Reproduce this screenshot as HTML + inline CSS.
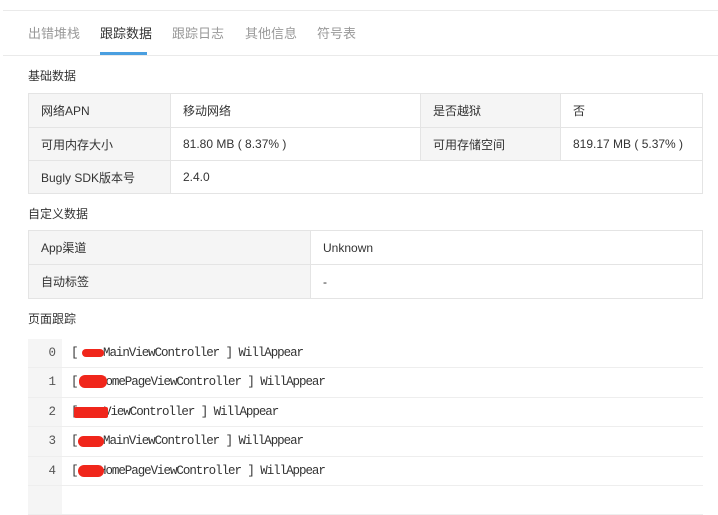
<!DOCTYPE html>
<html><head><meta charset="utf-8"><style>
*{margin:0;padding:0;box-sizing:border-box}
body{width:718px;height:496px;overflow:hidden;background:#fff;font-family:"Liberation Sans","Noto Sans CJK SC",sans-serif;color:#333;font-size:12px;position:relative}
.a{position:absolute}
.tab{position:absolute;top:23px;font-size:13px;color:#999}
table{position:absolute;border-collapse:collapse;left:28px;width:675px}
td{border:1px solid #e4e4e4;padding:0 12px;font-size:12px;color:#333}
td.g{background:#f5f5f5}
.code{position:absolute;left:28px;top:339px;width:675px;font-family:"Liberation Mono",monospace;font-size:12.5px;letter-spacing:-1.05px;color:#333}
.row{height:29.4px;border-bottom:1px solid #eee;position:relative}
.n{position:absolute;left:0;top:0;width:34px;height:100%;background:#f5f5f5;text-align:right;padding-right:6px;line-height:29px;color:#555;letter-spacing:0}
.t{position:absolute;top:0;line-height:29px;white-space:pre}
.red{position:absolute;background:#f0261b;border-radius:6px}
</style></head><body>
<div class="a" style="left:3px;top:10px;width:715px;height:1px;background:#eaeaea"></div>
<div class="tab" style="left:28px">出错堆栈</div>
<div class="tab" style="left:100px;color:#333">跟踪数据</div>
<div class="tab" style="left:172px">跟踪日志</div>
<div class="tab" style="left:245px">其他信息</div>
<div class="tab" style="left:317px">符号表</div>
<div class="a" style="left:3px;top:55px;width:715px;height:1px;background:#eaeaea"></div>
<div class="a" style="left:100px;top:52px;width:47px;height:3px;background:#4a9fe0"></div>
<div class="a" style="left:28px;top:67px;font-size:12px">基础数据</div>
<table style="top:93px"><tr style="height:34px"><td class="g" style="width:142px">网络APN</td><td style="width:250px">移动网络</td><td class="g" style="width:140px">是否越狱</td><td>否</td></tr>
<tr style="height:33px"><td class="g">可用内存大小</td><td>81.80 MB ( 8.37% )</td><td class="g">可用存储空间</td><td>819.17 MB ( 5.37% )</td></tr>
<tr style="height:33px"><td class="g">Bugly SDK版本号</td><td colspan="3">2.4.0</td></tr></table>
<div class="a" style="left:28px;top:205px">自定义数据</div>
<table style="top:230px"><tr style="height:34px"><td class="g" style="width:282px">App渠道</td><td>Unknown</td></tr>
<tr style="height:34px"><td class="g">自动标签</td><td>-</td></tr></table>
<div class="a" style="left:28px;top:310px">页面跟踪</div>
<div class="code">
<div class="row"><div class="n">0</div><div class="t" style="left:43px">[</div><div class="t" style="left:75px">MainViewController ] WillAppear</div><div class="red" style="left:54px;top:10px;width:22px;height:8px"></div></div>
<div class="row"><div class="n">1</div><div class="t" style="left:43px">[</div><div class="t" style="left:71px">HomePageViewController ] WillAppear</div><div class="red" style="left:51px;top:7px;width:28px;height:13px"></div></div>
<div class="row"><div class="n">2</div><div class="t" style="left:43px">[</div><div class="t" style="left:76px">ViewController ] WillAppear</div><div class="red" style="left:46px;top:9px;width:34px;height:11px;border-radius:2px"></div></div>
<div class="row"><div class="n">3</div><div class="t" style="left:43px">[</div><div class="t" style="left:75px">MainViewController ] WillAppear</div><div class="red" style="left:50px;top:9px;width:26px;height:11px"></div></div>
<div class="row"><div class="n">4</div><div class="t" style="left:43px">[</div><div class="t" style="left:71px">HomePageViewController ] WillAppear</div><div class="red" style="left:50px;top:8px;width:26px;height:12px"></div></div>
<div class="row"><div class="n"></div></div>
</div>
</body></html>
